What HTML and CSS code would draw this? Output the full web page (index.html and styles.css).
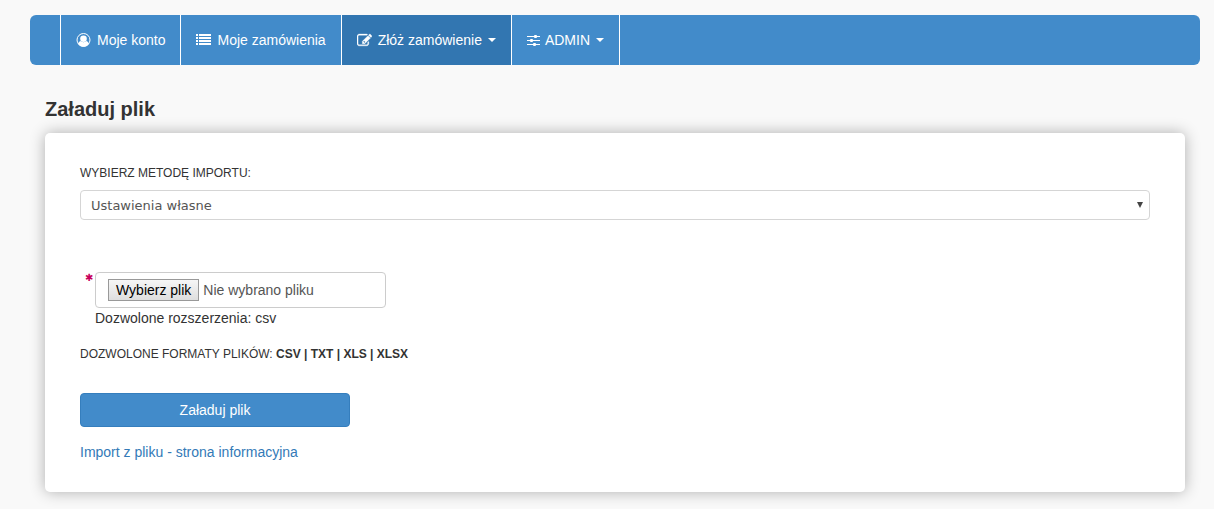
FILE: index.html
```
<!DOCTYPE html>
<html lang="pl">
<head>
  <meta charset="UTF-8">
  <meta name="viewport" content="width=device-width, initial-scale=1.0">
  <title>Załaduj plik</title>
  <link rel="stylesheet" href="styles.css">
</head>
<body>
  <nav class="navbar">
    <ul class="nav">
      <li>
        <a href="#">
          <svg class="icon" viewBox="0 0 15 15" aria-hidden="true">
            <circle cx="7.5" cy="7" r="6.5" fill="none" stroke="currentColor" stroke-width="1"/>
            <circle cx="7.5" cy="5.8" r="3.3"/>
            <path d="M2 11C2.300 9.600 3.300 8.600 4.500 8.100c1.900 1.400 4.100 1.400 6 0 1.200.500 2.200 1.500 2.500 2.900a7 7 0 0 1-11 0z"/>
          </svg>
          Moje konto
        </a>
      </li>
      <li>
        <a href="#">
          <svg class="icon" viewBox="0 0 15 15" aria-hidden="true">
            <path d="M0 1h2v2H0zM3 1h12v2H3zM0 4h2v2H0zM3 4h12v2H3zM0 7h2v2H0zM3 7h12v2H3zM0 10h2v2H0zM3 10h12v2H3z"/>
          </svg>
          Moje zamówienia
        </a>
      </li>
      <li class="active">
        <a href="#">
          <svg class="icon" viewBox="0 0 1792 1792" aria-hidden="true">
            <path stroke="currentColor" stroke-width="40" d="M888 1184l116-116-152-152-116 116v56h96v96h56zm520-126v190q0 119-84.500 203.500t-203.500 84.500h-832q-119 0-203.500-84.500t-84.500-203.500v-832q0-119 84.500-203.500t203.500-84.500h832q63 0 117 25 15 7 18 23 3 17-9 29l-49 49q-14 14-32 8-23-6-45-6h-832q-66 0-113 47t-47 113v832q0 66 47 113t113 47h832q66 0 113-47t47-113v-126q0-13 9-22l64-64q15-15 35-7t20 29zm-96-738l288 288-672 672h-288v-288zm444 132l-92 92-288-288 92-92q28-28 68-28t68 28l152 152q28 28 28 68t-28 68z"/>
          </svg>
          Złóż zamówienie
          <span class="caret"></span>
        </a>
      </li>
      <li>
        <a href="#">
          <svg class="icon icon-sliders" viewBox="0 0 13 15" aria-hidden="true">
            <path d="M0 3h8v1H0zM10 3h3v1h-3zM0 7h3v1H0zM5 7h8v1H5zM0 11h7v1H0zM9 11h4v1H9z"/>
            <rect x="7" y="2" width="3" height="3" rx="1"/>
            <rect x="3" y="6" width="3" height="3" rx="1"/>
            <rect x="6" y="10" width="3" height="3" rx="1"/>
          </svg>
          ADMIN
          <span class="caret"></span>
        </a>
      </li>
    </ul>
  </nav>

  <main class="content">
    <h1>Załaduj plik</h1>
    <form class="panel">
      <label class="caption" for="method">WYBIERZ METODĘ IMPORTU:</label>
      <div class="select-wrap">
        <select id="method">
          <option>Ustawienia własne</option>
        </select>
      </div>

      <div class="file-group">
        <span class="required" aria-hidden="true">✱</span>
        <label class="file-box">
          <input type="file" id="file" accept=".csv" required>
          <span class="file-button">Wybierz plik</span>
          <span id="fileName">Nie wybrano pliku</span>
        </label>
        <div>Dozwolone rozszerzenia: csv</div>
      </div>

      <p class="caption formats">DOZWOLONE FORMATY PLIKÓW: <b>CSV | TXT | XLS | XLSX</b></p>

      <button type="submit" class="btn">Załaduj plik</button>
      <a class="info-link" href="#">Import z pliku - strona informacyjna</a>
    </form>
  </main>

<script>
  document.getElementById('file').addEventListener('change', function () {
    document.getElementById('fileName').textContent = this.files.length ? this.files[0].name : 'Nie wybrano pliku';
  });
</script>
</body>
</html>
```
FILE: styles.css
```
* {
  box-sizing: border-box;
}
body {
  margin: 0;
  padding: 15px 14px 17px 30px;
  background-color: #f9f9f9;
  color: #333;
  font-family: "Liberation Sans", Arial, sans-serif;
  font-size: 14px;
  line-height: 20px;
}
a {
  color: #337ab7;
  text-decoration: none;
}
.navbar {
  padding-left: 30px;
  background: #428bca;
  border-radius: 6px;
}
.nav {
  display: flex;
  margin: 0;
  padding: 0;
  list-style: none;
}
.nav li {
  border-right: 1px solid #fff;
}
.nav li:first-child {
  border-left: 1px solid #fff;
}
.nav a {
  display: flex;
  align-items: center;
  padding: 15px;
  color: #fff;
}
.nav a:hover,
.nav .active a {
  background: #3276b1;
}
.icon {
  width: 15px;
  height: 15px;
  margin-right: 6px;
  fill: currentColor;
}
.icon-sliders {
  width: 13px;
  margin-right: 5px;
}
.caret {
  margin-left: 6px;
  border-top: 4px solid;
  border-left: 4px solid transparent;
  border-right: 4px solid transparent;
}
.content {
  padding: 0 15px;
}
h1 {
  margin: 32px 0 12px;
  font-size: 20px;
  line-height: 24px;
}
.panel {
  padding: 30px 35px;
  background: #fff;
  border-radius: 5px;
  box-shadow: 0 0 15px rgba(0, 0, 0, 0.3);
}
.caption {
  display: block;
  font-size: 12px;
}
.select-wrap {
  position: relative;
  margin-top: 7px;
}
.select-wrap::after {
  content: "";
  position: absolute;
  top: 12px;
  right: 7px;
  border-top: 6px solid #444;
  border-left: 3px solid transparent;
  border-right: 3px solid transparent;
  pointer-events: none;
}
select {
  display: block;
  width: 100%;
  height: 30px;
  padding: 0 20px 0 10px;
  border: 1px solid #d5d5d5;
  border-radius: 4px;
  background: #fff;
  color: #555;
  font-family: "DejaVu Sans", Verdana, sans-serif;
  font-size: 13px;
  appearance: none;
}
.file-group {
  position: relative;
  margin-top: 52px;
  padding-left: 15px;
}
.required {
  position: absolute;
  top: -4px;
  left: 5px;
  color: #c7005c;
  font-family: "DejaVu Sans", sans-serif;
  font-size: 10px;
  font-weight: bold;
}
.file-box {
  position: relative;
  display: flex;
  align-items: center;
  gap: 4px;
  width: 291px;
  max-width: 100%;
  height: 36px;
  padding: 0 12px;
  border: 1px solid #ccc;
  border-radius: 4px;
  color: #555;
}
.file-box input {
  position: absolute;
  inset: 0;
  width: 100%;
  opacity: 0;
  cursor: pointer;
}
.file-button {
  padding: 0 7px;
  border: 1px solid #999;
  background: linear-gradient(#f6f6f6, #dedede);
  color: #000;
}
.formats {
  margin: 16px 0 29px;
}
.btn {
  display: block;
  width: 270px;
  max-width: 100%;
  height: 34px;
  border: 1px solid #357ebd;
  border-radius: 4px;
  background: #428bca;
  color: #fff;
  font: inherit;
  cursor: pointer;
}
.btn:hover {
  background: #3276b1;
}
.info-link {
  display: inline-block;
  margin-top: 15px;
}
```
